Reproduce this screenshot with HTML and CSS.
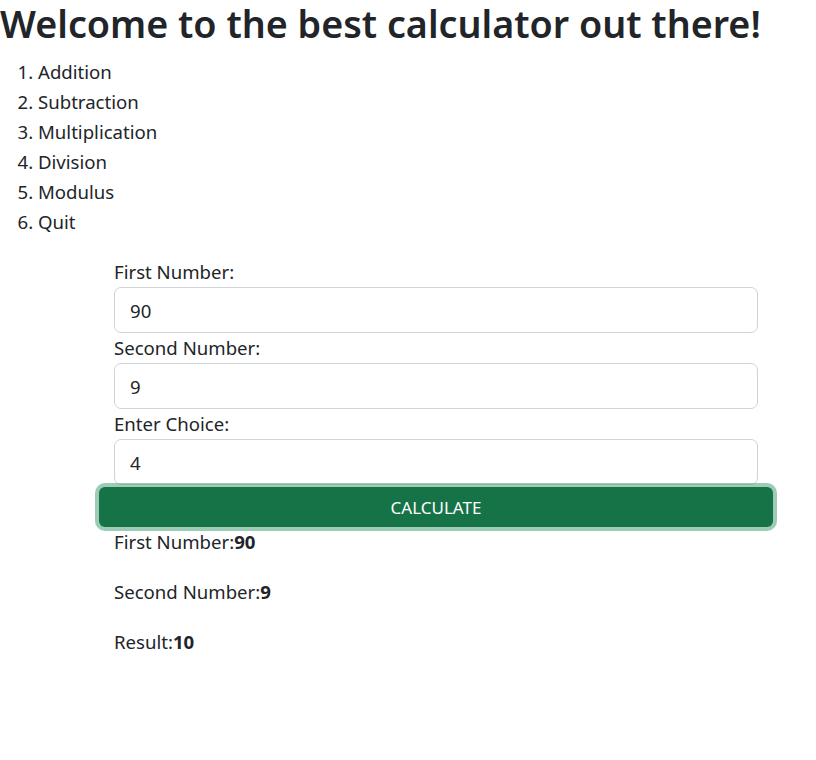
FILE: index.html
```html
<!DOCTYPE html>
<html>
<head>
<meta charset="utf-8">
<link rel="stylesheet" href="styles.css">
</head>
<body>
<h1 class="title">Welcome to the best calculator out there!</h1>
<ol class="menu">
  <li>Addition</li>
  <li>Subtraction</li>
  <li>Multiplication</li>
  <li>Division</li>
  <li>Modulus</li>
  <li>Quit</li>
</ol>
<form class="calc">
  <label class="field-label">First Number:</label>
  <input class="field" type="text" value="90">
  <label class="field-label">Second Number:</label>
  <input class="field" type="text" value="9">
  <label class="field-label">Enter Choice:</label>
  <input class="field" type="text" value="4">
  <button class="btn-calc" type="button">CALCULATE</button>
  <p class="out">First Number:<b>90</b></p>
  <p class="out">Second Number:<b>9</b></p>
  <p class="out">Result:<b>10</b></p>
</form>
</body>
</html>
```
FILE: styles.css
```css
* { box-sizing: border-box; }
body {
  margin: 0;
  font-family: "Noto Sans", "Open Sans", sans-serif;
  font-size: 18.6px;
  line-height: 30px;
  color: #212529;
  background: #fff;
}
.title {
  margin: 0 0 10px;
  font-size: 37.7px;
  font-weight: 600;
  line-height: 47px;
  white-space: nowrap;
}
.menu {
  margin: 0 0 20px;
  padding-left: 38px;
}
.menu li { line-height: 30px; }
.calc {
  margin: 0 58px 0 114px;
}
.field-label {
  display: block;
  line-height: 30px;
}
.field {
  display: block;
  width: 100%;
  height: 46px;
  padding: 0 15px;
  border: 1px solid #ced4da;
  border-radius: 7px;
  font: inherit;
  color: #212529;
  background: #fff;
}
.btn-calc {
  display: block;
  width: calc(100% + 30px);
  margin: 2px -15px 0;
  height: 40px;
  border: 0;
  border-radius: 6px;
  background: #157347;
  color: #fff;
  font-family: inherit;
  font-size: 17px;
  box-shadow: 0 0 0 4px rgba(60, 153, 110, 0.5);
  position: relative;
}
.out {
  margin: 0 0 20px;
}
.out b { font-weight: 700; }
```
